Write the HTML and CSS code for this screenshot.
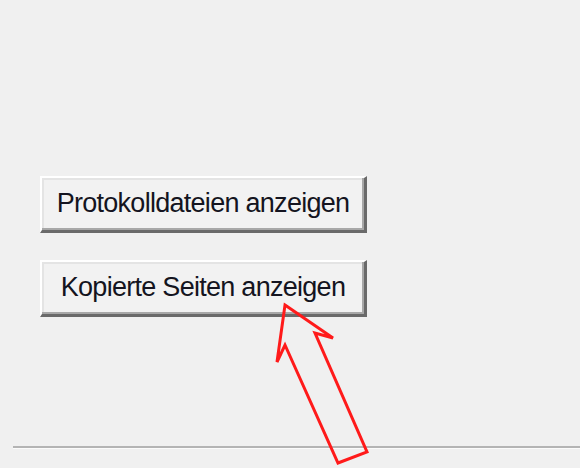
FILE: index.html
```html
<html lang="en">
<head>
    <meta charset="UTF-8">
    <title>Kopierte Seiten</title>
    <link rel="stylesheet" href="styles.css">
</head>
<body>
    <div class="panel">
        <div class="button-list">
            <button class="win-button">Protokolldateien anzeigen</button>
            <button class="win-button">Kopierte Seiten anzeigen</button>
        </div>
        <div class="separator"></div>
    </div>

    <!-- Markierung (Pfeil) ueber dem Screenshot -->
    <svg class="arrow" width="580" height="468" viewBox="0 0 580 468">
        <polygon points="285,305 333,338 315,333 367,452 338,463 285,345 277,362"
                 fill="none" stroke="#ff1a1a" stroke-width="3" stroke-linejoin="miter"/>
    </svg>
</body>
</html>
```

FILE: styles.css
```css
body {
    margin: 0;
    background-color: #f0f0f0;
    font-family: "Liberation Sans", Arial, sans-serif;
    width: 580px;
    height: 468px;
    overflow: hidden;
    position: relative;
}

.panel {
    padding-top: 176px;
}

.button-list {
    display: flex;
    flex-direction: column;
    gap: 27px;
    padding-left: 40px;
}

.win-button {
    width: 327px;
    height: 57px;
    padding: 0 0 2px 0;
    margin: 0;
    background-color: #f2f2f2;
    color: #141420;
    font-family: "Liberation Sans", Arial, sans-serif;
    font-size: 27px;
    letter-spacing: -0.72px;
    border-style: solid;
    border-width: 2px 3px 3px 2px;
    border-color: #ffffff #6a6a6a #6a6a6a #ffffff;
    box-shadow: inset -2px -2px 0 #a8a8a8, inset 2px 2px 0 #e4e4e4;
    cursor: pointer;
}

.separator {
    margin-top: 129px;
    margin-left: 13px;
    height: 2px;
    background-color: #b4b4b4;
    border-bottom: 1px solid #fbfbfb;
}

.arrow {
    position: absolute;
    left: 0;
    top: 0;
}
```
